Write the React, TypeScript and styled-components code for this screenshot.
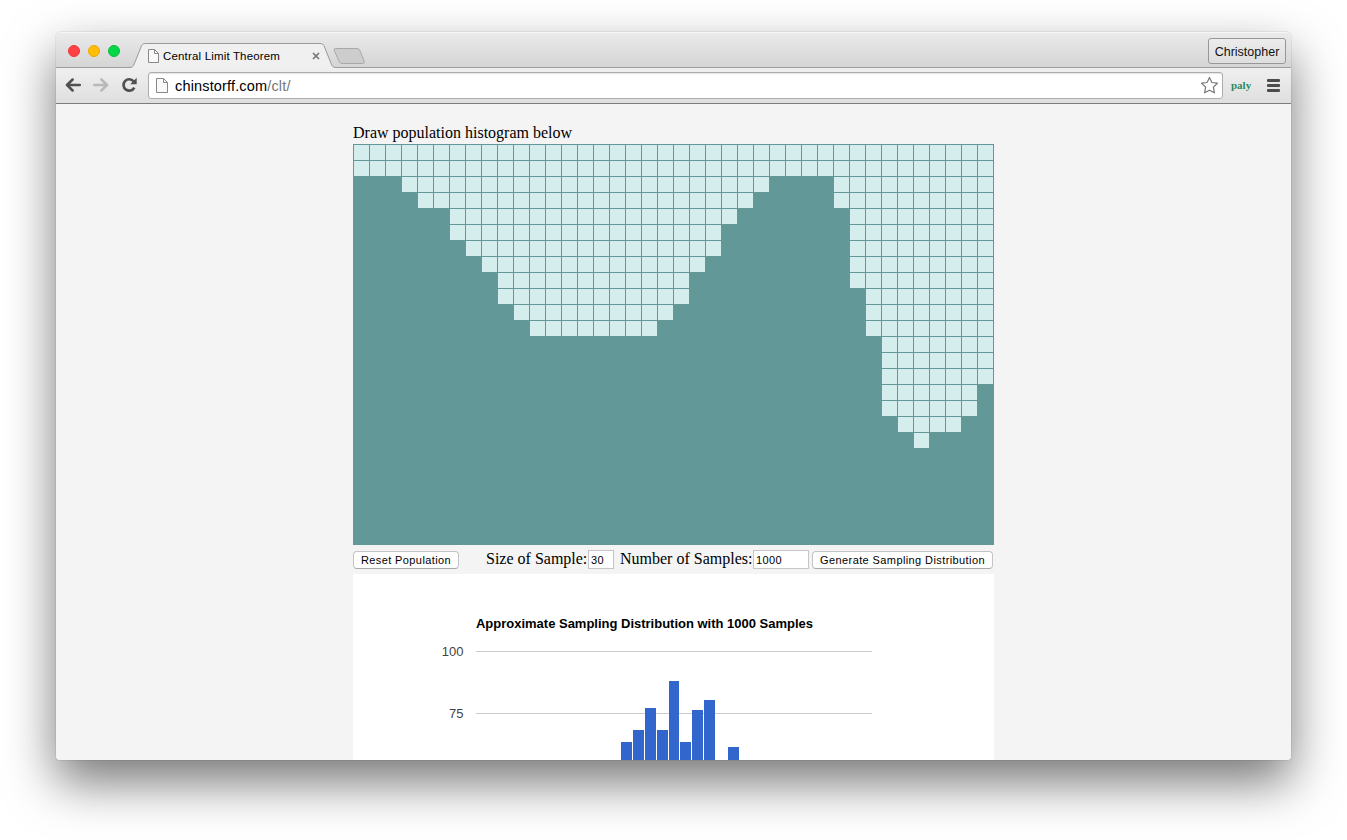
import React from "react";
import styled, { createGlobalStyle } from "styled-components";

const GlobalStyle = createGlobalStyle`
  * { box-sizing: border-box; }
  body {
    margin: 0;
    background: #fff;
    overflow: hidden;
    font-family: "Liberation Sans", Arial, sans-serif;
  }
`;

const Desktop = styled.div`
  height: 840px;
  padding: 32px 56px 0;
  overflow: hidden;
`;

const BrowserWindow = styled.div`
  display: flex;
  flex-direction: column;
  height: 728px;
  width: 1235px;
  border-radius: 5px 5px 4px 4px;
  box-shadow: 0 0 1px rgba(0, 0, 0, 0.55), 0 22px 50px rgba(0, 0, 0, 0.54);
`;

const TabStrip = styled.div`
  display: flex;
  height: 36px;
  flex: none;
  padding-left: 12px;
  border-radius: 5px 5px 0 0;
  border-bottom: 1px solid #9c9c9c;
  background: linear-gradient(#ebebeb, #d5d5d5);
  box-shadow: inset 0 1px 0 #f6f6f6;
`;

const Lights = styled.div`
  display: flex;
  gap: 8px;
  padding-top: 13px;
  width: 62px;
`;

const Light = styled.span<{ $fill: string; $edge: string }>`
  width: 12px;
  height: 12px;
  border-radius: 50%;
  background: ${(p) => p.$fill};
  border: 1px solid ${(p) => p.$edge};
`;

const Tab = styled.div`
  position: relative;
  width: 206px;
  height: 36px;
  padding: 17px 0 0 18px;
  display: flex;
  align-items: flex-start;
`;

const TabShape = styled.svg`
  position: absolute;
  left: 0;
  top: 10px;
`;

const TabTitle = styled.span`
  position: relative;
  width: 149px;
  margin-left: 4px;
  font-size: 11.5px;
  line-height: 14px;
  letter-spacing: 0.17px;
  color: #000;
  white-space: nowrap;
`;

const Glyph = styled.svg`
  position: relative;
  flex: none;
  display: block;
`;

const NewTab = styled.svg`
  margin: 15px 0 0 -4px;
  flex: none;
`;

const Profile = styled.div`
  margin: 6px 5px 0 auto;
  width: 78px;
  height: 26px;
  border: 1px solid #979797;
  border-radius: 3px;
  background: linear-gradient(#ececec, #dedede);
  text-align: center;
  font-size: 12.5px;
  line-height: 26px;
  color: #111;
`;

const Toolbar = styled.div`
  display: flex;
  align-items: center;
  flex: none;
  height: 36px;
  padding: 0 11px 0 9px;
  background: linear-gradient(#f0f0f0, #dedede);
  border-bottom: 1px solid #7c7c7c;
`;

const NavButtons = styled.div`
  display: flex;
  gap: 12px;
  width: 83px;
  padding-bottom: 1px;
`;

const AddressBar = styled.div`
  display: flex;
  align-items: center;
  width: 1075px;
  height: 27px;
  border: 1px solid #adadad;
  border-radius: 3px;
  background: #fff;
  padding: 0 3px 0 7px;
  box-shadow: inset 0 1px 1px #e4e4e4;
`;

const Address = styled.span`
  flex: 1;
  margin-left: 7px;
  font-size: 14.5px;
  line-height: 18px;
  letter-spacing: 0.16px;
  color: #000;
`;

const Path = styled.span`
  color: #777;
`;

const Extension = styled.span`
  margin-left: 8px;
  padding-bottom: 2px;
  width: 36px;
  font: bold 11px/14px "Liberation Serif", serif;
  color: #2f8a5e;
`;

const Page = styled.main`
  flex: 1;
  min-height: 0;
  overflow: hidden;
  background: #f4f4f4;
  border-radius: 0 0 4px 4px;
`;

const Content = styled.div`
  width: 641px;
  margin-left: 297px;
  padding-top: 20px;
  font: 16px/18px "Liberation Serif", "Times New Roman", serif;
  color: #000;
`;

const Heading = styled.div`
  height: 20px;
`;

const Histogram = styled.div`
  display: flex;
  width: 641px;
  height: 401px;
  padding: 1px 0 0 1px;
  gap: 1px;
  background: #629898;
`;

const Column = styled.div`
  display: flex;
  flex-direction: column;
  gap: 1px;
`;

const Cell = styled.div`
  width: 15px;
  height: 15px;
  background: #d6eded;
`;

const Controls = styled.div`
  display: flex;
  align-items: flex-start;
  height: 29px;
  padding-top: 5px;
  white-space: nowrap;
`;

const Button = styled.button<{ $width: number }>`
  width: ${(p) => p.$width}px;
  height: 18px;
  margin-top: 1px;
  padding: 0;
  border: 1px solid #c3c3c3;
  border-bottom-color: #a9a9a9;
  border-radius: 4px;
  background: #fff;
  font: 11px/16px "Liberation Sans", Arial, sans-serif;
  letter-spacing: 0.4px;
  color: #000;
`;

const Label = styled.label<{ $gap: number; $width: number }>`
  margin-left: ${(p) => p.$gap}px;
  width: ${(p) => p.$width}px;
`;

const Field = styled.input<{ $width: number }>`
  width: ${(p) => p.$width}px;
  height: 19px;
  padding: 1px 2px 0;
  border: 1px solid #c6c6c6;
  border-radius: 0;
  background: #fff;
  font: 11px "Liberation Sans", Arial, sans-serif;
  letter-spacing: 0.4px;
  color: #000;
  outline: none;
`;

const ChartPanel = styled.div`
  width: 641px;
  height: 186px;
  background: #fff;
`;

const Chart = styled.svg`
  display: block;
  font-family: "Liberation Sans", Arial, sans-serif;
  font-size: 13px;
`;

const emptyCells = [
  2, 2, 2, 3, 4, 4, 6, 7, 8, 10, 11, 12, 12, 12, 12, 12, 12, 12, 12, 11,
  10, 8, 7, 5, 4, 3, 2, 2, 2, 2, 4, 9, 12, 17, 18, 19, 18, 18, 17, 15,
];

const bars = [
  { x: 268, top: 168, w: 11 },
  { x: 280, top: 156, w: 11 },
  { x: 292, top: 134, w: 11 },
  { x: 304, top: 156, w: 11 },
  { x: 316, top: 107, w: 10 },
  { x: 327, top: 168, w: 11 },
  { x: 339, top: 136, w: 11 },
  { x: 351, top: 126, w: 11 },
  { x: 375, top: 173, w: 11 },
];

const PageIcon = ({ w, h }: { w: number; h: number }) => (
  <Glyph width={w} height={h} viewBox={`0 0 ${w} ${h}`}>
    <path d={`M.5 .5H${w - 4.5}L${w - 0.5} 4.5V${h - 0.5}H.5Z`} fill="#fafafa" stroke="#888" />
    <path d={`M${w - 4.5} .5V4.5H${w - 0.5}`} fill="none" stroke="#888" />
  </Glyph>
);

const ArrowIcon = ({ color, flip }: { color: string; flip?: boolean }) => (
  <Glyph width="16" height="16" viewBox="0 0 16 16">
    <path
      d="M14.800 8H2.500M7.600 2.500L2 8L7.600 13.500"
      transform={flip ? "translate(16 0) scale(-1 1)" : undefined}
      fill="none"
      stroke={color}
      strokeWidth="2.500"
      strokeLinecap="round"
      strokeLinejoin="round"
    />
  </Glyph>
);

const tabOutline =
  "M0 25.500C2.500 25.500 3.300 24.200 4.300 21.800L11 5C12 2.300 13 1.500 15.500 1.500H190C192.500 1.500 193.500 2.300 194.500 5L201.200 21.800C202.200 24.200 203 25.500 206 25.500";

export default function App() {
  return (
    <>
      <GlobalStyle />
      <Desktop>
        <BrowserWindow>
          <TabStrip>
            <Lights>
              <Light $fill="#ff4143" $edge="#e8383c" />
              <Light $fill="#ffbd08" $edge="#eba900" />
              <Light $fill="#05d747" $edge="#08bd3d" />
            </Lights>
            <Tab>
              <TabShape width="206" height="26" viewBox="0 0 206 26">
                <path d={`${tabOutline}V26H0Z`} fill="#f0f0f0" />
                <path d={tabOutline} fill="none" stroke="#999" />
              </TabShape>
              <PageIcon w={11} h={14} />
              <TabTitle>Central Limit Theorem</TabTitle>
              <Glyph width="8" height="14" viewBox="0 0 8 14">
                <path d="M1 4L7 10M7 4L1 10" stroke="#777" strokeWidth="1.700" />
              </Glyph>
            </Tab>
            <NewTab width="34" height="18" viewBox="0 0 34 18">
              <path
                d="M3.500 1.500H25Q27 1.500 27.700 3.200L32 14Q33 16.500 30.500 16.500H10Q8 16.500 7.200 14.500L2.200 3.500Q1.500 1.500 3.500 1.500Z"
                fill="#cdcdcd"
                stroke="#a8a8a8"
              />
            </NewTab>
            <Profile>Christopher</Profile>
          </TabStrip>
          <Toolbar>
            <NavButtons>
              <ArrowIcon color="#505050" />
              <ArrowIcon color="#b9b9b9" flip />
              <Glyph width="16" height="16" viewBox="0 0 16 16">
                <path d="M12.600 4.300A5.700 5.700 0 1 0 13.300 10.600" fill="none" stroke="#505050" strokeWidth="2.700" />
                <path d="M15.700 .8V7.300H9.200Z" fill="#505050" />
              </Glyph>
            </NavButtons>
            <AddressBar>
              <PageIcon w={12} h={15} />
              <Address>
                chinstorff.com<Path>/clt/</Path>
              </Address>
              <Glyph width="19" height="19" viewBox="0 0 19 19">
                <path
                  d="M9.500 1.500L11.900 6.500L17.400 7.200L13.400 11.100L14.400 16.800L9.500 14.200L4.600 16.800L5.600 11.100L1.600 7.200L7.100 6.500Z"
                  fill="#fff"
                  stroke="#777"
                  strokeWidth="1.200"
                  strokeLinejoin="round"
                />
              </Glyph>
            </AddressBar>
            <Extension>paly</Extension>
            <Glyph width="13" height="14" viewBox="0 0 13 14">
              <path
                d="M1 0H12Q13 0 13 1V2Q13 3 12 3H1Q0 3 0 2V1Q0 0 1 0ZM1 5H12Q13 5 13 6V7Q13 8 12 8H1Q0 8 0 7V6Q0 5 1 5ZM1 10H12Q13 10 13 11V12Q13 13 12 13H1Q0 13 0 12V11Q0 10 1 10Z"
                fill="#4c4c4c"
              />
            </Glyph>
          </Toolbar>
          <Page>
            <Content>
              <Heading>Draw population histogram below</Heading>
              <Histogram>
                {emptyCells.map((count, i) => (
                  <Column key={i}>
                    {Array.from({ length: count }, (_, j) => (
                      <Cell key={j} />
                    ))}
                  </Column>
                ))}
              </Histogram>
              <Controls>
                <Button $width={106}>Reset Population</Button>
                <Label $gap={27} $width={102}>Size of Sample:</Label>
                <Field $width={26} defaultValue="30" />
                <Label $gap={6} $width={133}>Number of Samples:</Label>
                <Field $width={56} defaultValue="1000" />
                <Label $gap={0} $width={3} />
                <Button $width={181}>Generate Sampling Distribution</Button>
              </Controls>
              <ChartPanel>
                <Chart width="641" height="186" viewBox="0 0 641 186">
                  <text x="123" y="54" fontWeight="bold" textLength="337">
                    Approximate Sampling Distribution with 1000 Samples
                  </text>
                  <path d="M123 77.500H519M123 139.500H519" stroke="#ccc" />
                  <text x="110.500" y="82" textAnchor="end" fill="#444">100</text>
                  <text x="110.500" y="144" textAnchor="end" fill="#444">75</text>
                  {bars.map((bar) => (
                    <rect key={bar.x} x={bar.x} y={bar.top} width={bar.w} height={186 - bar.top} fill="#3366cc" />
                  ))}
                </Chart>
              </ChartPanel>
            </Content>
          </Page>
        </BrowserWindow>
      </Desktop>
    </>
  );
}
